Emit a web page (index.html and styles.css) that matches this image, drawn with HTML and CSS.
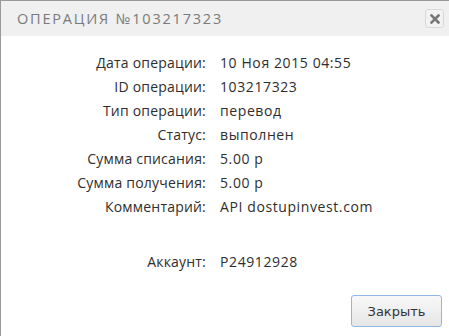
FILE: index.html
```html
<!DOCTYPE html>
<html lang="ru">
<head>
  <meta charset="UTF-8" />
  <title>Операция №103217323</title>
  <link rel="stylesheet" href="styles.css">
</head>
<body>

  <div class="dialog">
    <div class="dialog-header">
      <span class="dialog-title">Операция №103217323</span>
      <button class="close-btn" title="Закрыть">
        <svg width="10" height="10" viewBox="0 0 10 10">
          <path d="M1.5 1.5 L8.5 8.5 M8.5 1.5 L1.5 8.5" stroke="#777" stroke-width="2.6" stroke-linecap="square"/>
        </svg>
      </button>
    </div>

    <div class="dialog-body">
      <div class="info">
        <div class="label">Дата операции:</div>
        <div class="value">10 Ноя 2015 04:55</div>

        <div class="label">ID операции:</div>
        <div class="value">103217323</div>

        <div class="label">Тип операции:</div>
        <div class="value">перевод</div>

        <div class="label">Статус:</div>
        <div class="value">выполнен</div>

        <div class="label">Сумма списания:</div>
        <div class="value">5.00 р</div>

        <div class="label">Сумма получения:</div>
        <div class="value">5.00 р</div>

        <div class="label">Комментарий:</div>
        <div class="value">API dostupinvest.com</div>

        <div class="spacer"></div>

        <div class="label">Аккаунт:</div>
        <div class="value">P24912928</div>
      </div>
    </div>

    <div class="dialog-footer">
      <button class="btn">Закрыть</button>
    </div>
  </div>

</body>
</html>
```

FILE: styles.css
```css
body {
  margin: 0;
  background: #fff;
  font-family: 'Open Sans', sans-serif;
}

.dialog {
  width: 448px;
  height: 335px;
  border-top: 1px solid #9a9a9a;
  border-left: 1px solid #9a9a9a;
  background: #fff;
  display: flex;
  flex-direction: column;
}

.dialog-header {
  height: 35px;
  background: #f0f0f0;
  display: flex;
  align-items: center;
  justify-content: space-between;
  padding: 0 5px 0 16px;
}

.dialog-title {
  text-transform: uppercase;
  color: #7a7a7a;
  font-size: 14.5px;
  letter-spacing: 1.8px;
}

.close-btn {
  width: 19px;
  height: 19px;
  padding: 0;
  border: 1px solid #d8d8d8;
  border-radius: 3px;
  background: #f2f2f2;
  display: flex;
  align-items: center;
  justify-content: center;
  cursor: pointer;
}

.dialog-body {
  flex: 1;
  padding-top: 15px;
}

.info {
  display: grid;
  grid-template-columns: 205px 1fr;
  column-gap: 14px;
  line-height: 24px;
  font-size: 14px;
  color: #2e2e2e;
}

.label {
  text-align: right;
  letter-spacing: 0.2px;
}

.value {
  letter-spacing: 0.6px;
}

.spacer {
  grid-column: 1 / 3;
  height: 31px;
}

.dialog-footer {
  display: flex;
  justify-content: flex-end;
  padding: 0 7px 9px 0;
}

.btn {
  width: 91px;
  height: 32px;
  font-family: 'DejaVu Sans', Verdana, sans-serif;
  font-size: 13px;
  color: #333;
  border: 1px solid #8fb8e6;
  border-radius: 3px;
  background: linear-gradient(#f8f8f8, #e6e6e6);
  cursor: pointer;
}
```
